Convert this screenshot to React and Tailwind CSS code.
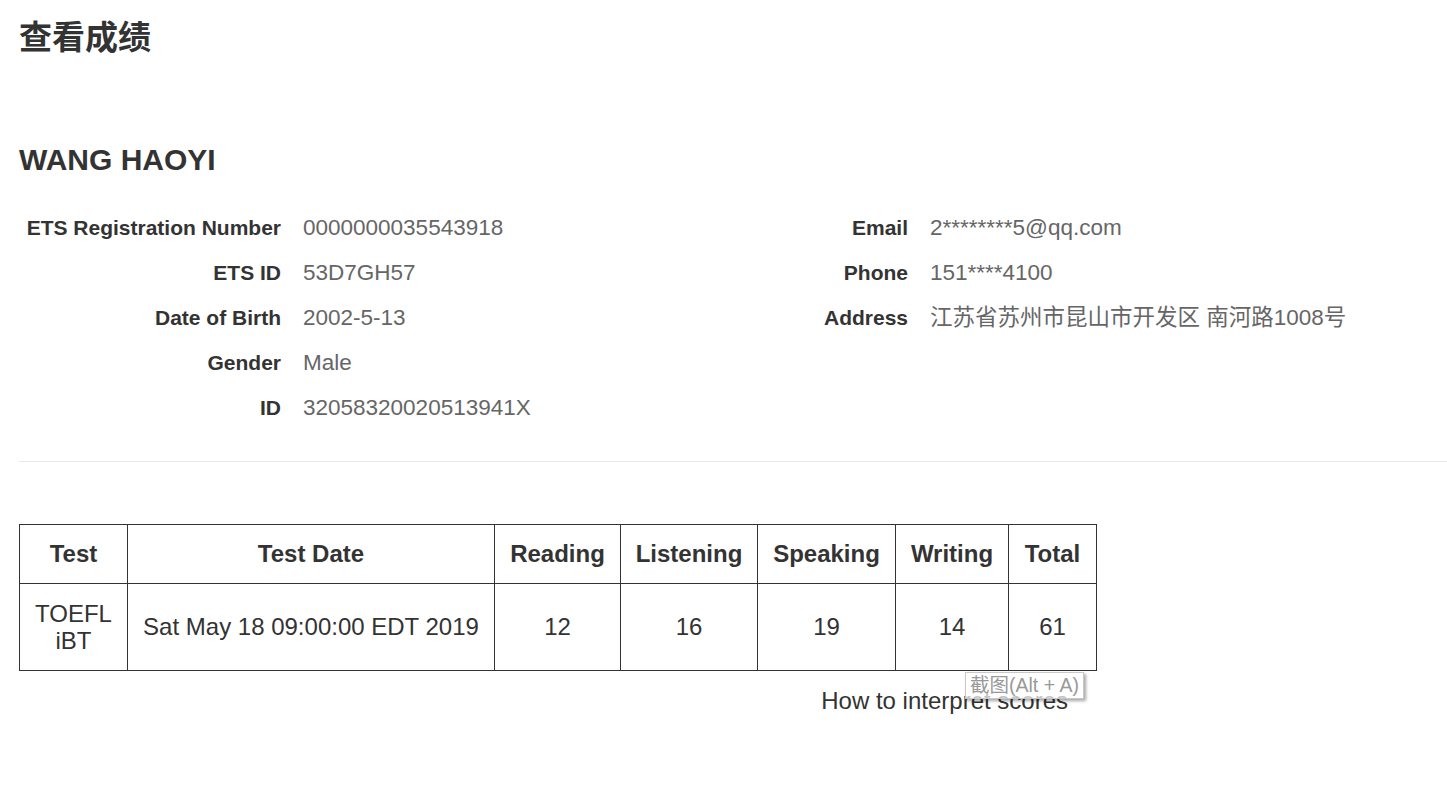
import React from "react";

const FONT = { fontFamily: '"Liberation Sans", Arial, "Noto Sans CJK SC", sans-serif' };

const leftRows = [
  ["ETS Registration Number", "0000000035543918"],
  ["ETS ID", "53D7GH57"],
  ["Date of Birth", "2002-5-13"],
  ["Gender", "Male"],
  ["ID", "32058320020513941X"],
];

const rightRows = [
  ["Email", "2********5@qq.com"],
  ["Phone", "151****4100"],
  ["Address", "江苏省苏州市昆山市开发区 南河路1008号"],
];

const cols = [
  { k: "Test", w: "w-[108px]" },
  { k: "Test Date", w: "w-[367px]" },
  { k: "Reading", w: "w-[126px]" },
  { k: "Listening", w: "w-[137px]" },
  { k: "Speaking", w: "w-[138px]" },
  { k: "Writing", w: "w-[113px]" },
  { k: "Total", w: "w-[88px]" },
];

function InfoRow({ label, value }) {
  return (
    <div className="flex items-center h-[45px]">
      <div className="w-[262px] shrink-0 text-right text-[21px] font-bold text-[#333]">
        {label}
      </div>
      <div className="pl-[22px] text-[22.5px] text-[#666] whitespace-nowrap">{value}</div>
    </div>
  );
}

export default function App() {
  return (
    <div className="min-h-screen bg-white text-[#333] pl-[19px] overflow-hidden" style={FONT}>
      {/* 标题 */}
      <h1 className="pt-[18px] text-[33px] leading-[40px] font-bold">查看成绩</h1>

      <h2 className="mt-[84px] text-[30px] leading-[36px] font-bold">WANG HAOYI</h2>

      {/* 个人信息 */}
      <div className="flex mt-[27px]">
        <div className="w-[627px] shrink-0">
          {leftRows.map(([l, v]) => (
            <InfoRow key={l} label={l} value={v} />
          ))}
        </div>
        <div>
          {rightRows.map(([l, v]) => (
            <InfoRow key={l} label={l} value={v} />
          ))}
        </div>
      </div>

      <div className="mt-[31px] h-px bg-[#e8e8e8]" />

      {/* 成绩表 */}
      <table className="mt-[62px] w-[1077px] table-fixed border-collapse border border-[#333] text-[24px]">
        <thead>
          <tr className="h-[59px]">
            {cols.map((c) => (
              <th key={c.k} className={`${c.w} border border-[#333] font-bold text-center px-0`}>
                {c.k}
              </th>
            ))}
          </tr>
        </thead>
        <tbody>
          <tr className="h-[87px]">
            <td className="border border-[#333] text-center leading-[27px] px-[10px]">TOEFL iBT</td>
            <td className="border border-[#333] text-center">Sat May 18 09:00:00 EDT 2019</td>
            <td className="border border-[#333] text-center">12</td>
            <td className="border border-[#333] text-center">16</td>
            <td className="border border-[#333] text-center">19</td>
            <td className="border border-[#333] text-center">14</td>
            <td className="border border-[#333] text-center">61</td>
          </tr>
        </tbody>
      </table>

      <div className="relative w-[1077px]">
        <div className="flex justify-end pr-[28px] pt-[15px] text-[24px] leading-[30px] text-[#333]">
          How to interpret scores
        </div>
        {/* 截图提示 */}
        <div className="absolute left-[946px] top-[1px] h-[27px] px-[4px] flex items-center border border-[#c8c8c8] bg-white/70 text-[19.5px] text-[#999] shadow-[2px_2px_3px_rgba(0,0,0,0.35)] whitespace-nowrap">
          截图(Alt + A)
        </div>
      </div>
    </div>
  );
}
